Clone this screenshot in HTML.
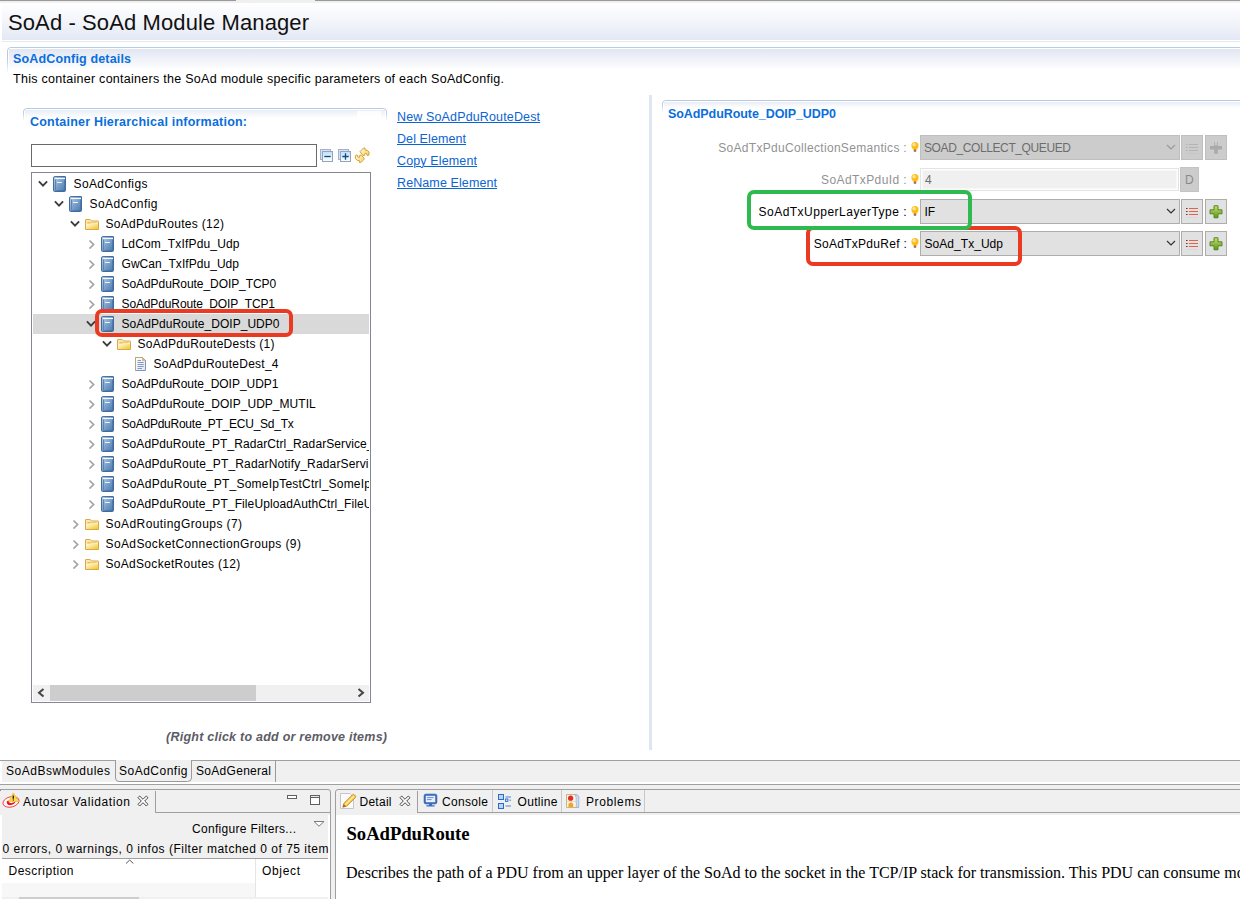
<!DOCTYPE html>
<html><head><meta charset="utf-8"><title>SoAd - SoAd Module Manager</title>
<style>
html,body{margin:0;padding:0}
body{width:1240px;height:899px;position:relative;overflow:hidden;background:#fff;font-family:"Liberation Sans",sans-serif;font-size:12px;color:#000}
body div,body svg{position:absolute}
.t{white-space:pre;line-height:normal}
#clip{left:0;top:0;width:369px;height:899px;overflow:hidden}
</style></head><body>
<svg width="0" height="0" style="position:absolute"><defs>
<linearGradient id="bk" x1="0" y1="0" x2="1" y2="1"><stop offset="0" stop-color="#bdd3e9"/><stop offset=".5" stop-color="#7ba1ca"/><stop offset="1" stop-color="#4577ad"/></linearGradient>
<linearGradient id="fd" x1="0" y1="0" x2="0" y2="1"><stop offset="0" stop-color="#fdf6cf"/><stop offset="1" stop-color="#f1c534"/></linearGradient>
<linearGradient id="cg" x1="0" y1="0" x2="0" y2="1"><stop offset="0" stop-color="#bfe0fa"/><stop offset="1" stop-color="#fdfeff"/></linearGradient>
<linearGradient id="sy" x1="0" y1="0" x2="1" y2="1"><stop offset="0" stop-color="#fffbe0"/><stop offset="1" stop-color="#f4d05a"/></linearGradient>
<linearGradient id="ff" x1="0" y1="0" x2="1" y2="1"><stop offset="0" stop-color="#fffbe8"/><stop offset="1" stop-color="#f0c724"/></linearGradient>
<linearGradient id="dg" x1="0" y1="0" x2="1" y2="1"><stop offset="0" stop-color="#ffffff"/><stop offset="1" stop-color="#dde6f6"/></linearGradient>
<linearGradient id="pg" x1="0" y1="0" x2="0" y2="1"><stop offset="0" stop-color="#c4dc6a"/><stop offset="1" stop-color="#5c9c1e"/></linearGradient>
<symbol id="book" viewBox="0 0 16 16"><path d="M2.6 .6 L13.2 .5 Q13.5 .5 13.5 1 V14.4 Q13.5 15.5 12.4 15.5 H2.6 Q1.5 15.5 1.5 14.4 V1.8 Q1.5 .7 2.6 .6Z" fill="url(#bk)" stroke="#456a9c"/><path d="M3 2.5 H13" stroke="#f4f7fb"/><path d="M3.5 3.5 V14.5" stroke="#4f7db4" stroke-opacity=".85"/><path d="M4.5 14.5 H12.5 M12.5 3.5 V14" stroke="#3a6da8" stroke-opacity=".6"/><rect x="5" y="6" width="5" height="1" fill="#edf3fa"/></symbol>
<symbol id="folder" viewBox="0 0 16 16"><path d="M1.5 13.5 V3.9 Q1.5 3.5 1.9 3.5 H6.2 L7.6 5 H14.1 Q14.5 5 14.5 5.4 V13.5 Z" fill="#fbedb0" stroke="#dfa446"/><path d="M3.2 5.7 H6 L6.9 6.3 H12.8 V7 H6.9 L6 7.6 H3.2Z" fill="#f0c066"/><rect x="2.1" y="8" width="11.8" height="5" fill="url(#ff)"/></symbol>
<symbol id="doc" viewBox="0 0 16 16"><path d="M3.5 1.5 H10.5 L13.5 4.5 V14.5 H3.5Z" fill="url(#dg)" stroke="#8593b7"/><path d="M3.5 14 V1.5 H10.5" stroke="#b8a878" fill="none"/><path d="M10.5 1.5 L13.5 4.5 H10.5Z" fill="#dcbc74" stroke="#c4a66a" stroke-width=".6"/><path d="M5.5 4.5 H9 M5.5 6.5 H11.7 M5.5 8.5 H11.7 M5.5 10.5 H11.7 M5.5 12.5 H10" stroke="#8499c6" stroke-width="1"/></symbol>
<symbol id="chd" viewBox="0 0 10 10"><path d="M.9 2.3 L5 6.6 L9.1 2.3" fill="none" stroke="#3c3c3c" stroke-width="1.8"/></symbol>
<symbol id="chr" viewBox="0 0 10 10"><path d="M3.5 1.5 L7.6 5.5 L3.5 9.5" fill="none" stroke="#a2a2a2" stroke-width="1.7"/></symbol>
<symbol id="collapse" viewBox="0 0 14 14"><rect x=".5" y=".5" width="10" height="10" fill="#cfe6fa" stroke="#a6b0c8"/><rect x="2.5" y="2.5" width="10" height="10" fill="url(#cg)" stroke="#98a2be"/><path d="M4.3 7.5 H10.7" stroke="#0c4a82" stroke-width="1.3"/></symbol>
<symbol id="expand" viewBox="0 0 14 14"><rect x=".5" y=".5" width="10" height="10" fill="#cfe6fa" stroke="#a6b0c8"/><rect x="2.5" y="2.5" width="10" height="10" fill="url(#cg)" stroke="#98a2be"/><path d="M4.3 7.5 H10.7 M7.5 4.3 V10.7" stroke="#0c4a82" stroke-width="1.3"/></symbol>
<symbol id="sync" viewBox="0 0 16 16"><path d="M6 4.7 L9.5 1 H11 V3 L13 3.2 L15 5 V8 L13.3 8.8 L12.5 6.5 L11 6.3 L10.5 8.5 H9 Z" fill="url(#sy)" stroke="#d09a2a" stroke-width=".9" stroke-linejoin="round"/><path d="M10.4 11.9 L6.9 15.6 H5.4 V13.6 L3.4 13.4 L1.4 11.6 V8.6 L3.1 7.8 L3.9 10.1 L5.4 10.3 L5.9 8.1 H7.4 Z" fill="url(#sy)" stroke="#d09a2a" stroke-width=".9" stroke-linejoin="round"/></symbol>
<symbol id="bulb" viewBox="0 0 8 10"><circle cx="4" cy="3.7" r="3.6" fill="#ffbf18"/><circle cx="3.1" cy="2.7" r="1.6" fill="#ffe9a0"/><rect x="2.5" y="6.8" width="3" height="1.4" fill="#e8951c"/><rect x="2.8" y="8.1" width="2.4" height="1.6" fill="#86644a"/></symbol>
<symbol id="list" viewBox="0 0 16 16"><path d="M2 4.5 H3.6 M2 7.5 H3.6 M2 10.5 H3.6" stroke="#8e2a1a" stroke-width="1.2"/><path d="M5 4.5 H14 M5 7.5 H14 M5 10.5 H14" stroke="#e0644c" stroke-width="1.1"/><path d="M3 13.5 H14" stroke="#d6d6d6" stroke-width=".8"/></symbol>
<symbol id="listg" viewBox="0 0 16 16"><path d="M2 4.5 H3.6 M2 7.5 H3.6 M2 10.5 H3.6 M5 4.5 H14 M5 7.5 H14 M5 10.5 H14" stroke="#b4b4b4" stroke-width="1.1"/><path d="M3 13.5 H14" stroke="#c4c4c4" stroke-width=".8"/></symbol>
<symbol id="plus" viewBox="0 0 16 16"><path d="M6 1.8 H10 V5.8 H14 V9.8 H10 V13.8 H6 V9.8 H2 V5.8 H6Z" fill="url(#pg)" stroke="#4e7f1c" stroke-width=".9"/></symbol>
<symbol id="plusg" viewBox="0 0 16 16"><path d="M6.2 2 H9.8 V6 H14 V9.6 H9.8 V13.8 H6.2 V9.6 H2 V6 H6.2Z" fill="#aaaaaa"/><rect x="7.1" y="2.2" width="1.8" height="3" fill="#d2d2d2"/></symbol>
<symbol id="closex" viewBox="0 0 12 12"><path d="M1 2.7 L2.7 1 L6 4.3 L9.3 1 L11 2.7 L7.7 6 L11 9.3 L9.3 11 L6 7.7 L2.7 11 L1 9.3 L4.3 6 Z" fill="#fff" stroke="#484848" stroke-width="1"/></symbol>
<symbol id="autosar" viewBox="0 0 20 18"><ellipse cx="10" cy="9.9" rx="8.2" ry="5.1" fill="#fff" fill-opacity=".6" stroke="#f03c3c" stroke-width=".9" transform="rotate(-14 10 9.9)"/><path d="M5.8 9.2 Q5.4 13.4 10 13.1 Q13.6 12.5 14.9 9 Q12 11.5 9.5 11.1 Q7.3 10.6 7.7 8.6 Z" fill="#f01014"/><path d="M12.3 .9 L17.7 9.5 H7.9 Z" fill="#ffd940" stroke="#eeb63a" stroke-width=".7" stroke-linejoin="round"/><path d="M12.3 3.4 V6.7 M12.3 7.5 V8.5" stroke="#1a1a1a" stroke-width="1.3"/></symbol>
<symbol id="pencil" viewBox="0 0 18 18"><path d="M1.5 1.5 H11 L14.5 5 V16.5 H1.5Z" fill="#fbfbfb" stroke="#c6c6c6"/><path d="M5 11.2 L13.6 2.6 Q14.6 2 15.6 3 L16.4 3.8 Q17 4.8 16.4 5.6 L7.6 14.2 L3.8 15.2 Z" fill="#f3c84a" stroke="#cf8a2c" stroke-width=".9"/><path d="M6.4 12.6 L14.8 4.2" stroke="#fdf0b0" stroke-width="1.3"/><path d="M3.8 15.2 L4.6 12 L7 14.4Z" fill="#a0622a"/></symbol>
<symbol id="console" viewBox="0 0 16 16"><rect x="1.2" y="1.2" width="12.6" height="9.6" rx="1.6" fill="#3a6cc4" stroke="#2a56a8" stroke-width=".8"/><rect x="2.8" y="2.8" width="9.4" height="6.4" fill="#e9f1fc"/><path d="M4 4.6 H10.6 M4 6.6 H8.6" stroke="#5a7fcc" stroke-width=".9"/><path d="M6 10.8 H9 V12.3 H11.6 V13.6 H3.4 V12.3 H6Z" fill="#3a6cc4"/></symbol>
<symbol id="outline" viewBox="0 0 16 18"><rect x="1.5" y="2.5" width="5" height="5" fill="#b9d7f5" stroke="#2c6acc"/><rect x="1.5" y="11.5" width="5" height="5" fill="#b9d7f5" stroke="#2c6acc"/><rect x="8.5" y="7" width="2.4" height="2.4" fill="#d9e9fa" stroke="#2c6acc" stroke-width=".9"/><path d="M8.5 5 H14 M12.4 8.2 H14 M8.5 14 H14" stroke="#4a82d8" stroke-width="1"/></symbol>
<symbol id="problems" viewBox="0 0 16 18"><path d="M1.5 2.5 H10 Q12.5 2.5 13.5 4 V15.5 H1.5Z" fill="#fbf6e2" stroke="#c9b67a"/><path d="M10 2.8 Q12 6 11 9 Q12 12 11 15.4 H13.8 V4.5 Q12.5 2.8 10 2.8Z" fill="#cfddf3" stroke="#93acd8" stroke-width=".7"/><path d="M2 9.5 H11 M6 3 V15" stroke="#d8cfae" stroke-width=".6"/><circle cx="5.6" cy="6.2" r="2.6" fill="#e8282c"/><path d="M3.4 15 V12.6 Q3.6 10.4 5.8 10.4 Q8 10.4 8.2 12.6 V15Z" fill="#f5a12c"/></symbol>
</defs></svg>

<div style="left:0px;top:0px;width:1240px;height:3px;background:#f0f0f0"></div><div style="left:0px;top:0px;width:236px;height:1px;background:#999"></div><div style="left:315px;top:0px;width:925px;height:1px;background:#999"></div><div style="left:2px;top:3px;width:1238px;height:37px;background:linear-gradient(#fff 0%,#f4f6fb 45%,#e3e8f3 100%)"></div><div style="left:2px;top:41px;width:1238px;height:1px;background:#e3e8f3"></div><div style="left:7px;top:47px;width:1240px;height:30px;border:1px solid #b9cbe3;border-bottom:0;border-radius:4px 0 0 0;box-sizing:border-box;-webkit-mask-image:linear-gradient(#000 40%,transparent 90%);background:linear-gradient(#fff,#fff) padding-box"></div><div style="left:9px;top:49px;width:1231px;height:21px;background:linear-gradient(#e1e6f2,#fff)"></div><div style="left:23px;top:108px;width:364px;height:14px;border:1px solid #b9cbe3;border-bottom:0;border-radius:4px 4px 0 0;box-sizing:border-box;-webkit-mask-image:linear-gradient(#000 30%,transparent 95%)"></div><div style="left:25px;top:110px;width:360px;height:8px;background:linear-gradient(#e9edf6,#fff)"></div><div style="left:357px;top:111px;width:24px;height:8px;background:#fff;opacity:.8"></div><div style="left:662px;top:100px;width:600px;height:14px;border:1px solid #b9cbe3;border-bottom:0;border-radius:4px 0 0 0;box-sizing:border-box;-webkit-mask-image:linear-gradient(#000 30%,transparent 95%)"></div><div style="left:664px;top:102px;width:600px;height:6px;background:linear-gradient(#e9edf6,#fff)"></div><div style="left:649px;top:95px;width:3px;height:655px;background:#dfe5f1"></div><div style="left:31px;top:144px;width:286px;height:23px;border:1px solid #6a6a6a;box-sizing:border-box;background:#fff"></div><div style="left:31px;top:172px;width:340px;height:531px;border:1px solid #828790;box-sizing:border-box;background:#fff"></div><div style="left:33px;top:314px;width:336px;height:20px;background:#d9d9d9"></div><div style="left:33px;top:685px;width:336px;height:16px;background:#f0f0f0"></div><div style="left:50px;top:685px;width:206px;height:16px;background:#cdcdcd"></div><svg style="left:36px;top:687px" width="10" height="12" viewBox="0 0 10 12"><path d="M7.5 2 L3 5.8 L7.5 9.6" fill="none" stroke="#444" stroke-width="2"/></svg><svg style="left:356px;top:687px" width="10" height="12" viewBox="0 0 10 12"><path d="M2.5 2 L7 5.8 L2.5 9.6" fill="none" stroke="#444" stroke-width="2"/></svg><svg style="left:52px;top:176px" width="16" height="16"><use href="#book"/></svg><svg style="left:38px;top:179px" width="10" height="10"><use href="#chd"/></svg><svg style="left:68px;top:196px" width="16" height="16"><use href="#book"/></svg><svg style="left:54px;top:199px" width="10" height="10"><use href="#chd"/></svg><svg style="left:84px;top:216px" width="16" height="16"><use href="#folder"/></svg><svg style="left:70px;top:219px" width="10" height="10"><use href="#chd"/></svg><svg style="left:100px;top:236px" width="16" height="16"><use href="#book"/></svg><svg style="left:86px;top:239px" width="10" height="10"><use href="#chr"/></svg><svg style="left:100px;top:256px" width="16" height="16"><use href="#book"/></svg><svg style="left:86px;top:259px" width="10" height="10"><use href="#chr"/></svg><svg style="left:100px;top:276px" width="16" height="16"><use href="#book"/></svg><svg style="left:86px;top:279px" width="10" height="10"><use href="#chr"/></svg><svg style="left:100px;top:296px" width="16" height="16"><use href="#book"/></svg><svg style="left:86px;top:299px" width="10" height="10"><use href="#chr"/></svg><svg style="left:100px;top:316px" width="16" height="16"><use href="#book"/></svg><svg style="left:86px;top:319px" width="10" height="10"><use href="#chd"/></svg><svg style="left:116px;top:336px" width="16" height="16"><use href="#folder"/></svg><svg style="left:102px;top:339px" width="10" height="10"><use href="#chd"/></svg><svg style="left:132px;top:356px" width="16" height="16"><use href="#doc"/></svg><svg style="left:100px;top:376px" width="16" height="16"><use href="#book"/></svg><svg style="left:86px;top:379px" width="10" height="10"><use href="#chr"/></svg><svg style="left:100px;top:396px" width="16" height="16"><use href="#book"/></svg><svg style="left:86px;top:399px" width="10" height="10"><use href="#chr"/></svg><svg style="left:100px;top:416px" width="16" height="16"><use href="#book"/></svg><svg style="left:86px;top:419px" width="10" height="10"><use href="#chr"/></svg><svg style="left:100px;top:436px" width="16" height="16"><use href="#book"/></svg><svg style="left:86px;top:439px" width="10" height="10"><use href="#chr"/></svg><svg style="left:100px;top:456px" width="16" height="16"><use href="#book"/></svg><svg style="left:86px;top:459px" width="10" height="10"><use href="#chr"/></svg><svg style="left:100px;top:476px" width="16" height="16"><use href="#book"/></svg><svg style="left:86px;top:479px" width="10" height="10"><use href="#chr"/></svg><svg style="left:100px;top:496px" width="16" height="16"><use href="#book"/></svg><svg style="left:86px;top:499px" width="10" height="10"><use href="#chr"/></svg><svg style="left:84px;top:516px" width="16" height="16"><use href="#folder"/></svg><svg style="left:70px;top:519px" width="10" height="10"><use href="#chr"/></svg><svg style="left:84px;top:536px" width="16" height="16"><use href="#folder"/></svg><svg style="left:70px;top:539px" width="10" height="10"><use href="#chr"/></svg><svg style="left:84px;top:556px" width="16" height="16"><use href="#folder"/></svg><svg style="left:70px;top:559px" width="10" height="10"><use href="#chr"/></svg><svg style="left:320px;top:149px" width="14" height="14"><use href="#collapse"/></svg><svg style="left:338px;top:149px" width="14" height="14"><use href="#expand"/></svg><svg style="left:354px;top:147px" width="16" height="16"><use href="#sync"/></svg><div style="left:920px;top:135px;width:260px;height:25px;border:1px solid #bfbfbf;box-sizing:border-box;background:#cccccc"></div><svg style="left:1166px;top:144px" width="10" height="7" viewBox="0 0 10 7"><path d="M1 1 L5 5 L9 1" fill="none" stroke="#9a9a9a" stroke-width="1.2"/></svg><div style="left:1181px;top:135px;width:22px;height:25px;border:1px solid #bfbfbf;box-sizing:border-box;background:#cccccc"></div><div style="left:1205px;top:135px;width:22px;height:25px;border:1px solid #bfbfbf;box-sizing:border-box;background:#cccccc"></div><svg style="left:1184px;top:140px" width="16" height="16"><use href="#listg"/></svg><svg style="left:1208px;top:140px" width="16" height="16"><use href="#plusg"/></svg><div style="left:920px;top:168px;width:259px;height:23px;border:1px solid #e3e3e3;box-sizing:border-box;background:#f0f0f0;box-shadow:inset 0 0 0 1.5px #fdfdfd"></div><div style="left:1180px;top:167px;width:19px;height:25px;border:1px solid #c4c4c4;box-sizing:border-box;background:#cccccc"></div><div style="left:920px;top:199px;width:260px;height:25px;border:1px solid #adadad;box-sizing:border-box;background:#e1e1e1"></div><svg style="left:1166px;top:208px" width="10" height="7" viewBox="0 0 10 7"><path d="M1 1 L5 5 L9 1" fill="none" stroke="#333" stroke-width="1.2"/></svg><div style="left:1181px;top:199px;width:22px;height:25px;border:1px solid #adadad;box-sizing:border-box;background:#e1e1e1"></div><div style="left:1205px;top:199px;width:22px;height:25px;border:1px solid #adadad;box-sizing:border-box;background:#e1e1e1"></div><svg style="left:1184px;top:204px" width="16" height="16"><use href="#list"/></svg><svg style="left:1208px;top:204px" width="16" height="16"><use href="#plus"/></svg><div style="left:920px;top:231px;width:260px;height:25px;border:1px solid #adadad;box-sizing:border-box;background:#e1e1e1"></div><svg style="left:1166px;top:240px" width="10" height="7" viewBox="0 0 10 7"><path d="M1 1 L5 5 L9 1" fill="none" stroke="#333" stroke-width="1.2"/></svg><div style="left:1181px;top:231px;width:22px;height:25px;border:1px solid #adadad;box-sizing:border-box;background:#e1e1e1"></div><div style="left:1205px;top:231px;width:22px;height:25px;border:1px solid #adadad;box-sizing:border-box;background:#e1e1e1"></div><svg style="left:1184px;top:236px" width="16" height="16"><use href="#list"/></svg><svg style="left:1208px;top:236px" width="16" height="16"><use href="#plus"/></svg><svg style="left:911px;top:142px" width="8" height="10"><use href="#bulb"/></svg><svg style="left:911px;top:174px" width="8" height="10"><use href="#bulb"/></svg><svg style="left:911px;top:206px" width="8" height="10"><use href="#bulb"/></svg><svg style="left:911px;top:238px" width="8" height="10"><use href="#bulb"/></svg><div style="left:0px;top:760px;width:1240px;height:1px;background:#a0a0a0"></div><div style="left:2px;top:761px;width:1238px;height:21px;background:#f0f0f0"></div><svg style="left:0;top:760px" width="300" height="24" viewBox="0 0 300 24"><path d="M115.5 0 V18 Q115.5 21.5 119 21.5 H187.5 Q191.5 21.5 191.5 18 V0" fill="#f0f0f0" stroke="#9a9a9a" stroke-width="1"/><path d="M275.5 0 V22" stroke="#9a9a9a" stroke-width="1"/></svg><div style="left:0px;top:784px;width:1240px;height:1px;background:#a0a0a0"></div><div style="left:0px;top:785px;width:1240px;height:114px;background:#f0f0f0"></div><div style="left:-3px;top:789px;width:334px;height:120px;border:1px solid #9f9f9f;border-radius:3px;box-sizing:border-box"></div><div style="left:0px;top:790px;width:1px;height:1px;background:#8a8a8a"></div><div style="left:0px;top:815px;width:2px;height:84px;background:#fff"></div><div style="left:155px;top:812px;width:175px;height:1px;background:#9f9f9f"></div><div style="left:155px;top:791px;width:1px;height:21px;background:#9f9f9f"></div><div style="left:328px;top:815px;width:2px;height:84px;background:#fff"></div><div style="left:2px;top:858px;width:326px;height:1px;background:#a0a0a0"></div><div style="left:2px;top:859px;width:326px;height:40px;background:#fff"></div><div style="left:2px;top:883px;width:253px;height:14px;background:#f7f7f7"></div><div style="left:255px;top:859px;width:1px;height:40px;background:#e5e5e5"></div><div style="left:2px;top:897px;width:326px;height:2px;background:#f0f0f0"></div><div style="left:19px;top:897px;width:120px;height:2px;background:#cdcdcd"></div><svg style="left:125px;top:859px" width="10" height="6" viewBox="0 0 10 6"><path d="M1 4.5 L4.7 1 L8.4 4.5" fill="none" stroke="#555" stroke-width="1"/></svg><svg style="left:137px;top:795px" width="12" height="12" viewBox="0 0 12 12"><use href="#closex"/></svg><svg style="left:399px;top:795px" width="12" height="12" viewBox="0 0 12 12"><use href="#closex"/></svg><div style="left:287px;top:795px;width:10px;height:4px;border:1px solid #606060;box-sizing:border-box;background:#fff"></div><div style="left:310px;top:795px;width:10px;height:10px;border:1px solid #606060;border-top-width:3px;box-sizing:border-box;background:#fff"></div><div style="left:311px;top:796px;width:8px;height:1px;background:#e8e8e8"></div><svg style="left:313px;top:820px" width="12" height="8" viewBox="0 0 12 8"><path d="M1 1.5 H11 L6 6.2 Z" fill="#fff" stroke="#7a7a7a" stroke-width="1"/></svg><svg style="left:1px;top:792px" width="20" height="18"><use href="#autosar"/></svg><div style="left:335px;top:789px;width:920px;height:120px;border:1px solid #9f9f9f;border-radius:3px;box-sizing:border-box"></div><div style="left:336px;top:815px;width:904px;height:84px;background:#fff"></div><div style="left:417px;top:812px;width:823px;height:1px;background:#9f9f9f"></div><div style="left:417px;top:791px;width:1px;height:21px;background:#9f9f9f"></div><div style="left:492px;top:790px;width:1px;height:22px;background:#c8c8c8"></div><div style="left:561px;top:790px;width:1px;height:22px;background:#c8c8c8"></div><div style="left:644px;top:790px;width:1px;height:22px;background:#c8c8c8"></div><svg style="left:339px;top:792px" width="18" height="18"><use href="#pencil"/></svg><svg style="left:423px;top:793px" width="16" height="16"><use href="#console"/></svg><svg style="left:497px;top:792px" width="16" height="18"><use href="#outline"/></svg><svg style="left:565px;top:792px" width="16" height="18"><use href="#problems"/></svg>
<div id="clip">
<div class="t" style="top:177px;font-size:12px;left:73.5px;letter-spacing:0.395px;">SoAdConfigs</div>
<div class="t" style="top:197px;font-size:12px;left:89.5px;letter-spacing:0.439px;">SoAdConfig</div>
<div class="t" style="top:217px;font-size:12px;left:105.5px;letter-spacing:0.300px;">SoAdPduRoutes (12)</div>
<div class="t" style="top:237px;font-size:12px;left:121.5px;letter-spacing:0.162px;">LdCom_TxIfPdu_Udp</div>
<div class="t" style="top:257px;font-size:12px;left:121.5px;letter-spacing:0.048px;">GwCan_TxIfPdu_Udp</div>
<div class="t" style="top:277px;font-size:12px;left:121.5px;letter-spacing:-0.066px;">SoAdPduRoute_DOIP_TCP0</div>
<div class="t" style="top:297px;font-size:12px;left:121.5px;letter-spacing:-0.124px;">SoAdPduRoute_DOIP_TCP1</div>
<div class="t" style="top:317px;font-size:12px;left:121.5px;letter-spacing:0.027px;">SoAdPduRoute_DOIP_UDP0</div>
<div class="t" style="top:337px;font-size:12px;left:137.5px;letter-spacing:0.280px;">SoAdPduRouteDests (1)</div>
<div class="t" style="top:357px;font-size:12px;left:153.5px;letter-spacing:0.250px;">SoAdPduRouteDest_4</div>
<div class="t" style="top:377px;font-size:12px;left:121.5px;letter-spacing:-0.021px;">SoAdPduRoute_DOIP_UDP1</div>
<div class="t" style="top:397px;font-size:12px;left:121.5px;letter-spacing:0.029px;">SoAdPduRoute_DOIP_UDP_MUTIL</div>
<div class="t" style="top:417px;font-size:12px;left:121.5px;letter-spacing:-0.242px;">SoAdPduRoute_PT_ECU_Sd_Tx</div>
<div class="t" style="top:437px;font-size:12px;left:121.5px;letter-spacing:0.084px;">SoAdPduRoute_PT_RadarCtrl_RadarService_</div>
<div class="t" style="top:457px;font-size:12px;left:121.5px;letter-spacing:0.149px;">SoAdPduRoute_PT_RadarNotify_RadarServi</div>
<div class="t" style="top:477px;font-size:12px;left:121.5px;letter-spacing:0.223px;">SoAdPduRoute_PT_SomeIpTestCtrl_SomeIp</div>
<div class="t" style="top:497px;font-size:12px;left:121.5px;letter-spacing:0.108px;">SoAdPduRoute_PT_FileUploadAuthCtrl_FileU</div>
<div class="t" style="top:517px;font-size:12px;left:105.5px;letter-spacing:0.426px;">SoAdRoutingGroups (7)</div>
<div class="t" style="top:537px;font-size:12px;left:105.5px;letter-spacing:0.389px;">SoAdSocketConnectionGroups (9)</div>
<div class="t" style="top:557px;font-size:12px;left:105.5px;letter-spacing:0.303px;">SoAdSocketRoutes (12)</div>
</div>
<div class="t" style="top:10px;font-size:22px;left:8px;letter-spacing:0.104px;color:#111;">SoAd - SoAd Module Manager</div>
<div class="t" style="top:52px;font-size:12.5px;left:13px;letter-spacing:0.160px;font-weight:bold;color:#0a6edc;">SoAdConfig details</div>
<div class="t" style="top:72px;font-size:12.5px;left:13px;letter-spacing:0.275px;">This container containers the SoAd module specific parameters of each SoAdConfig.</div>
<div class="t" style="top:115px;font-size:12.5px;left:30px;letter-spacing:0.213px;font-weight:bold;color:#0a6edc;">Container Hierarchical information:</div>
<div class="t" style="top:110px;font-size:12.5px;left:397px;letter-spacing:0.139px;color:#0b64d2;text-decoration:underline;text-underline-offset:1px;text-decoration-thickness:1px">New SoAdPduRouteDest</div>
<div class="t" style="top:132px;font-size:12.5px;left:397px;letter-spacing:0.091px;color:#0b64d2;text-decoration:underline;text-underline-offset:1px;text-decoration-thickness:1px">Del Element</div>
<div class="t" style="top:154px;font-size:12.5px;left:397px;letter-spacing:0.135px;color:#0b64d2;text-decoration:underline;text-underline-offset:1px;text-decoration-thickness:1px">Copy Element</div>
<div class="t" style="top:176px;font-size:12.5px;left:397px;letter-spacing:0.103px;color:#0b64d2;text-decoration:underline;text-underline-offset:1px;text-decoration-thickness:1px">ReName Element</div>
<div class="t" style="top:730px;font-size:12.5px;left:166px;letter-spacing:0.242px;font-weight:bold;font-style:italic;color:#5c5c66;">(Right click to add or remove items)</div>
<div class="t" style="top:107px;font-size:12.5px;left:668px;letter-spacing:-0.070px;font-weight:bold;color:#0a6edc;">SoAdPduRoute_DOIP_UDP0</div>
<div class="t" style="top:140.5px;font-size:12px;right:333px;letter-spacing:0.313px;color:#929292;">SoAdTxPduCollectionSemantics :</div>
<div class="t" style="top:172.5px;font-size:12px;right:333px;letter-spacing:0.398px;color:#929292;">SoAdTxPduId :</div>
<div class="t" style="top:204.5px;font-size:12px;right:333px;letter-spacing:0.472px;">SoAdTxUpperLayerType :</div>
<div class="t" style="top:236.5px;font-size:12px;right:333px;letter-spacing:0.278px;">SoAdTxPduRef :</div>
<div class="t" style="top:140.5px;font-size:12px;left:924px;letter-spacing:-0.391px;color:#6d6d6d;">SOAD_COLLECT_QUEUED</div>
<div class="t" style="top:172.5px;font-size:12px;left:925px;color:#6d6d6d;">4</div>
<div class="t" style="top:204.5px;font-size:12px;left:924.5px;">IF</div>
<div class="t" style="top:236.5px;font-size:12px;left:924.5px;letter-spacing:0.045px;">SoAd_Tx_Udp</div>
<div class="t" style="top:173px;font-size:12px;left:1185px;color:#8a8a8a;">D</div>
<div class="t" style="top:763.5px;font-size:12px;left:6px;letter-spacing:0.508px;">SoAdBswModules</div>
<div class="t" style="top:763.5px;font-size:12px;left:119px;letter-spacing:0.495px;">SoAdConfig</div>
<div class="t" style="top:763.5px;font-size:12px;left:196px;letter-spacing:0.295px;">SoAdGeneral</div>
<div class="t" style="top:795px;font-size:12px;left:23px;letter-spacing:0.617px;">Autosar Validation</div>
<div class="t" style="top:821.5px;font-size:12px;left:192px;letter-spacing:0.313px;">Configure Filters...</div>
<div class="t" style="top:842px;font-size:12px;left:2.5px;letter-spacing:0.501px;">0 errors, 0 warnings, 0 infos (Filter matched 0 of 75 item</div>
<div class="t" style="top:864px;font-size:12px;left:8.5px;letter-spacing:0.497px;">Description</div>
<div class="t" style="top:864px;font-size:12px;left:262px;letter-spacing:0.662px;">Object</div>
<div class="t" style="top:795px;font-size:12px;left:359.5px;letter-spacing:0.263px;">Detail</div>
<div class="t" style="top:795px;font-size:12px;left:442px;letter-spacing:0.328px;">Console</div>
<div class="t" style="top:795px;font-size:12px;left:517.5px;letter-spacing:0.328px;">Outline</div>
<div class="t" style="top:795px;font-size:12px;left:586px;letter-spacing:0.616px;">Problems</div>
<div class="t" style="top:822.5px;font-size:18.72px;left:346.5px;letter-spacing:-0.062px;font-weight:bold;font-family:'Liberation Serif',serif;">SoAdPduRoute</div>
<div class="t" style="top:864px;font-size:16px;left:346px;font-family:'Liberation Serif',serif;">Describes the path of a PDU from an upper layer of the SoAd to the socket in the TCP/IP stack for transmission. This PDU can consume mo</div>
<div style="left:95px;top:309.2px;width:198px;height:27.8px;border:4.6px solid #ea3a22;border-radius:7px;box-sizing:border-box"></div><div style="left:806px;top:225.9px;width:215.9px;height:39.9px;border:4.1px solid #ea3a22;border-radius:7px;box-sizing:border-box"></div><div style="left:747.3px;top:189.8px;width:224.7px;height:39.9px;border:4.1px solid #2fba4f;border-radius:7px;box-sizing:border-box"></div>
</body></html>
